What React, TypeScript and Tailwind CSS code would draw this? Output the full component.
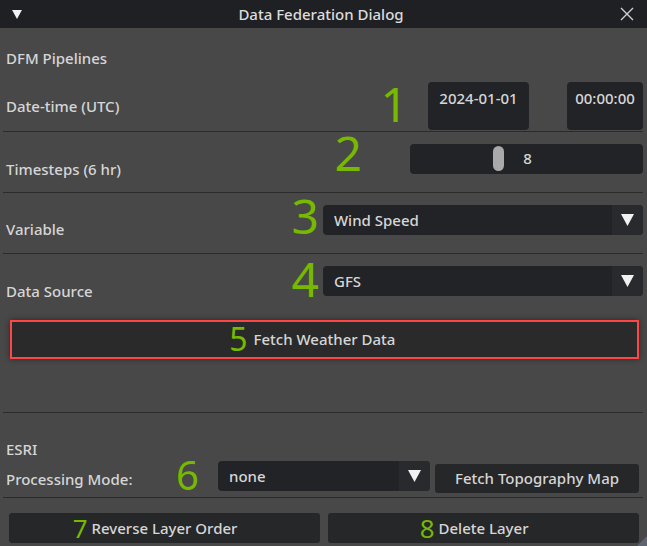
import React from 'react';

// ─── Shared bits ──────────────────────────────────────────────────────────────
const FONT = "font-['Noto_Sans',sans-serif]";

function Tri({ className }: { className?: string }) {
    return (
        <svg viewBox="0 0 12 11" className={className}>
            <polygon points="0,0 12,0 6,11" fill="#f2f2f2" />
        </svg>
    );
}

function Dropdown({ value, className }: { value: string; className: string }) {
    return (
        <div className={`flex h-[30px] rounded-[4px] bg-[#222326] overflow-hidden ${className}`}>
            <div className="flex-1 flex items-center pl-[11px] text-[15px] font-medium text-[#d6d6d6] leading-none">{value}</div>
            <div className="w-[31px] flex items-center justify-center bg-[#292a2d]">
                <Tri className="w-[13px] h-[12px]" />
            </div>
        </div>
    );
}

// label stays centred; the green step number hangs off its left side
function ActionButton({ n, label, className }: { n: string; label: string; className: string }) {
    return (
        <button className={`h-[30px] rounded-[3px] bg-[#262729] flex items-center justify-center text-[15px] font-medium text-[#d6d6d6] ${className}`}>
            <span className="relative leading-none">
                <span className="absolute right-full mr-[4px] top-1/2 -translate-y-1/2 text-[26px] font-normal leading-none text-[#76b900]">{n}</span>
                {label}
            </span>
        </button>
    );
}

// ─── Main component ───────────────────────────────────────────────────────────
export default function App() {
    return (
        <div className={`${FONT} w-[647px] h-[546px] bg-[#484848] flex flex-col overflow-hidden text-[#d6d6d6] font-medium`}>
            {/* ── Title bar ── */}
            <div className="h-[28px] shrink-0 bg-[#1f2023] flex items-center px-[12px] relative">
                <Tri className="w-[10px] h-[9px]" />
                <div className="flex-1 text-center text-[15px] text-[#dcdcdc] leading-none">Data Federation Dialog</div>
                <svg viewBox="0 0 14 14" className="w-[14px] h-[14px] mr-[1px]">
                    <path d="M1 1 L13 13 M13 1 L1 13" stroke="#d0d0d0" strokeWidth="1.4" />
                </svg>
            </div>

            <div className="flex-1 flex flex-col pl-[3px] pr-[4px] border-l-2 border-[#3c3c3c] -ml-[2px] relative">
                {/* ── DFM Pipelines ── */}
                <div className="h-[52px] pl-[3px] pt-[20px] text-[15px] leading-[20px]">DFM Pipelines</div>

                {/* ── Date-time ── */}
                <div className="flex h-[52px] border-b border-[#2b2b2b]">
                    <div className="flex-1 pl-[3px] mt-[16px] text-[15px] leading-[20px]">Date-time (UTC)</div>
                    <span className="text-[48px] font-normal leading-[48px] text-[#76b900] mr-[20px]">1</span>
                    <div className="w-[101px] h-[48px] mt-[2px] rounded-[4px] bg-[#222326] text-center pt-[6px] text-[15px] leading-[20px]">2024-01-01</div>
                    <div className="w-[76px] h-[48px] mt-[2px] ml-[38px] rounded-[4px] bg-[#222326] text-center pt-[6px] text-[15px] leading-[20px]">00:00:00</div>
                </div>

                {/* ── Timesteps ── */}
                <div className="flex h-[61px] border-b border-[#2b2b2b]">
                    <div className="flex-1 pl-[3px] mt-[27px] text-[15px] leading-[20px]">Timesteps (6 hr)</div>
                    <span className="text-[48px] font-normal leading-[48px] text-[#76b900] -mt-[3px] mr-[48px]">2</span>
                    <div className="relative w-[233px] h-[30px] mt-[12px] rounded-[4px] bg-[#222326] flex items-center justify-center text-[15px] leading-none">
                        <div className="absolute left-[83px] top-[2px] w-[11px] h-[25px] rounded-full bg-[#a9a9a9]" />
                        <span className="-mt-[2px] pl-[2px]">8</span>
                    </div>
                </div>

                {/* ── Variable ── */}
                <div className="flex h-[61px] border-b border-[#2b2b2b]">
                    <div className="flex-1 pl-[3px] mt-[26px] text-[15px] leading-[20px]">Variable</div>
                    <span className="text-[48px] font-normal leading-[48px] text-[#76b900] -mt-[1px] mr-[4px]">3</span>
                    <Dropdown value="Wind Speed" className="w-[320px] mt-[12px]" />
                </div>

                {/* ── Data Source ── */}
                <div className="flex h-[56px]">
                    <div className="flex-1 pl-[3px] mt-[27px] text-[15px] leading-[20px]">Data Source</div>
                    <span className="text-[48px] font-normal leading-[48px] text-[#76b900] mt-[1px] mr-[4px]">4</span>
                    <Dropdown value="GFS" className="w-[320px] mt-[12px]" />
                </div>

                {/* ── Fetch weather ── */}
                <div className="h-[103px] border-b border-[#2b2b2b] pt-[10px] pl-[7px]">
                    <button className="w-[629px] h-[39px] border-2 border-[#ff4545] bg-[#2a2a2a] shadow-[0_0_6px_rgba(0,0,0,0.45)] flex items-center justify-center text-[15px] font-medium text-[#d6d6d6]">
                        <span className="relative leading-none">
                            <span className="absolute right-full mr-[6px] top-1/2 -translate-y-1/2 -mt-[1px] text-[32px] font-normal leading-none text-[#76b900]">5</span>
                            Fetch Weather Data
                        </span>
                    </button>
                </div>

                {/* ── ESRI ── */}
                <div className="h-[85px] border-b border-[#2b2b2b] flex flex-col">
                    <div className="pl-[3px] mt-[26px] text-[15px] leading-[20px]">ESRI</div>
                    <div className="flex h-[38px]">
                        <div className="w-[173px] pl-[3px] mt-[10px] text-[15px] leading-[20px]">Processing Mode:</div>
                        <span className="w-[23px] text-[40px] font-normal leading-[40px] text-[#76b900] -mt-[4px]">6</span>
                        <Dropdown value="none" className="w-[212px] mt-[2px] ml-[19px]" />
                        <button className="w-[204px] h-[29px] mt-[5px] ml-[5px] rounded-[3px] bg-[#262729] text-[15px] font-medium leading-none text-[#d6d6d6]">
                            Fetch Topography Map
                        </button>
                    </div>
                </div>

                {/* ── Layer actions ── */}
                <div className="flex pt-[15px] pl-[6px] gap-[8px]">
                    <ActionButton n="7" label="Reverse Layer Order" className="w-[311px]" />
                    <ActionButton n="8" label="Delete Layer" className="w-[311px]" />
                </div>

                {/* resize grip */}
                <svg viewBox="0 0 10 10" className="absolute right-0 bottom-0 w-[10px] h-[10px]">
                    <polygon points="10,0 10,10 0,10" fill="#5e6470" />
                </svg>
            </div>
        </div>
    );
}
